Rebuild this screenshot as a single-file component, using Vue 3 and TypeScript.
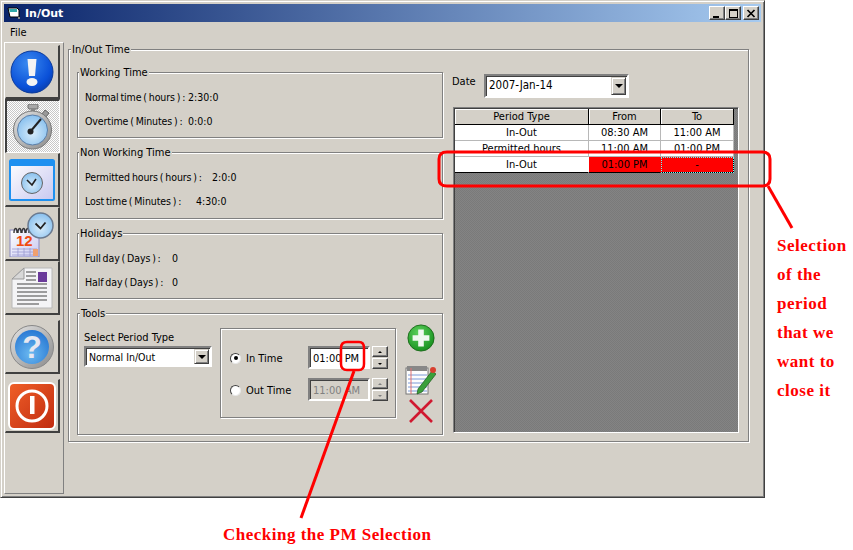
<template>
  <div class="page">
    <div class="top">
      <div class="window">
        <div class="titlebar">
          <svg class="app-icon" width="14" height="14" viewBox="0 0 14 14">
            <path d="M1 2h9l2 2v7H3z" fill="#fff" stroke="#000" />
            <path d="M2 3h8v3H3z" fill="#3aa" />
            <rect x="11" y="11" width="2" height="2" fill="#888" />
          </svg>
          <span class="title">In/Out</span>
          <div class="caption-btns">
            <button class="cap-btn"><i class="min"></i></button>
            <button class="cap-btn"><i class="max"></i></button>
            <button class="cap-btn close-btn">
              <svg width="10" height="9" viewBox="0 0 10 9"><path d="M1.5 1l7 7M8.5 1l-7 7" stroke="#000" stroke-width="1.7" fill="none" /></svg>
            </button>
          </div>
        </div>
        <div class="menubar"><span>File</span></div>

        <div class="client">
          <div class="sidebar">
            <button class="side-btn">
              <svg width="44" height="44" viewBox="0 0 44 44">
                <circle cx="22" cy="22" r="21" fill="url(#blueBall)" stroke="#0a3a9a" />
                <path d="M17.5 9h9l-1.5 17h-6z" fill="#f4f4f4" />
                <ellipse cx="22" cy="32" rx="5.5" ry="4" fill="#f4f4f4" />
              </svg>
            </button>
            <button class="side-btn active">
              <svg width="42" height="46" viewBox="0 0 42 46">
                <rect x="16" y="0" width="10" height="5" rx="1.5" fill="#a8a8a8" stroke="#666" />
                <rect x="19" y="4" width="4" height="4" fill="#888" />
                <path d="M33 6l4 3-3 4-4-3z" fill="#999" stroke="#666" />
                <circle cx="20.500" cy="26" r="19" fill="url(#steel)" stroke="#777" />
                <circle cx="20.500" cy="26" r="15" fill="url(#face)" stroke="#5a7ea8" />
                <path d="M18 28L29 15" stroke="#222" stroke-width="2" />
                <circle cx="18.500" cy="27.500" r="3" fill="#222" />
              </svg>
            </button>
            <button class="side-btn">
              <svg width="46" height="42" viewBox="0 0 46 42">
                <rect x="1" y="1" width="44" height="40" rx="1.500" fill="url(#paper)" stroke="#1e90f0" stroke-width="2" />
                <rect x="1" y="1" width="44" height="6" fill="#1e90f0" />
                <circle cx="23" cy="24" r="10.500" fill="url(#face)" stroke="#666" />
                <path d="M18 21l5 5 4-6" stroke="#222" stroke-width="1.600" fill="none" />
              </svg>
            </button>
            <button class="side-btn">
              <svg width="46" height="46" viewBox="0 -2 46 46">
                <rect x="1" y="17" width="29" height="27" fill="url(#paper)" stroke="#8a8ac0" />
                <path d="M5 20c0-6 3-6 3 0M9 20c0-6 3-6 3 0M13 20c0-6 3-6 3 0M17 20c0-6 3-6 3 0" stroke="#333" fill="none" stroke-width="1.400" />
                <text x="7" y="33" class="cal-num">12</text>
                <path d="M3 36h25M3 39h25M3 42h25M9 35v8M15 35v8M21 35v8" stroke="#9a9ad0" stroke-width=".8" />
                <rect x="24" y="36" width="5" height="7" fill="#f0a070" />
                <circle cx="31.500" cy="12.500" r="12.500" fill="url(#face)" stroke="#6a7a90" stroke-width="1.500" />
                <path d="M26.500 10.500l5 5 5-6" stroke="#222" stroke-width="1.800" fill="none" />
              </svg>
            </button>
            <button class="side-btn">
              <svg width="42" height="42" viewBox="0 0 42 42">
                <path d="M13 1h28v40H1V12z" fill="#f4f4f6" stroke="#b8b8b8" />
                <path d="M13 1v11H1z" fill="#d8d8d8" stroke="#999" />
                <rect x="27" y="5" width="9" height="10" fill="#6a3a9a" />
                <path d="M15 5h10M15 9h10M15 13h10M6 17h30M6 21h30M6 25h30M6 29h30M6 33h30M6 37h22" stroke="#444" stroke-width="1" />
              </svg>
            </button>
            <button class="side-btn sep">
              <svg width="44" height="44" viewBox="0 0 44 44">
                <circle cx="22" cy="22" r="21.500" fill="url(#steel)" stroke="#888" />
                <circle cx="22" cy="22" r="17" fill="url(#blueBall2)" />
                <text x="22" y="33" class="q-mark">?</text>
              </svg>
            </button>
            <button class="side-btn sep">
              <svg width="48" height="48" viewBox="0 0 48 48">
                <rect x="1" y="1" width="46" height="46" rx="5" fill="url(#redSq)" stroke="#fff" stroke-width="2" />
                <circle cx="24" cy="24" r="15" fill="none" stroke="#fff" stroke-width="3" />
                <rect x="22" y="14" width="4.500" height="18" fill="#fff" />
              </svg>
            </button>
          </div>

          <fieldset class="group main-group">
            <legend>In/Out Time</legend>
            <div class="main-inner">
              <div class="left-col">
                <fieldset v-for="g in summary" :key="g.title" class="group info" :class="g.cls">
                  <legend>{{ g.title }}</legend>
                  <div v-for="r in g.rows" :key="r.label" class="info-row">
                    <span class="info-label" :style="{ width: r.width + 'px' }">{{ r.label }}</span>{{ r.value }}
                  </div>
                </fieldset>

                <fieldset class="group tools">
                  <legend>Tools</legend>
                  <div class="tools-inner">
                    <div class="period-col">
                      <div class="period-label">Select Period Type</div>
                      <div class="combo period-combo">
                        <span class="combo-text">Normal In/Out</span>
                        <span class="combo-arrow"><i></i></span>
                      </div>
                    </div>

                    <div class="time-box">
                      <div class="time-row">
                        <label class="radio-label"><span class="radio on"></span>In Time</label>
                        <div class="time-input">01:00 PM</div>
                        <div class="spin">
                          <span class="spin-btn"><i class="up"></i></span>
                          <span class="spin-btn"><i class="down"></i></span>
                        </div>
                      </div>
                      <div class="time-row">
                        <label class="radio-label"><span class="radio"></span>Out Time</label>
                        <div class="time-input disabled">11:00 AM</div>
                        <div class="spin off">
                          <span class="spin-btn"><i class="up"></i></span>
                          <span class="spin-btn"><i class="down"></i></span>
                        </div>
                      </div>
                    </div>

                    <div class="tool-icons">
                      <svg width="28" height="28" viewBox="0 0 30 30">
                        <circle cx="15" cy="15" r="14" fill="url(#greenBall)" stroke="#1a6a1a" />
                        <path d="M12 6h6v6h6v6h-6v6h-6v-6H6v-6h6z" fill="#f0f8f0" />
                      </svg>
                      <svg width="31" height="32" viewBox="0 0 31 32">
                        <rect x="1" y="5" width="22" height="26" fill="#fdfdfd" stroke="#777" />
                        <path d="M2 3h20v5H2z" fill="#888" />
                        <path d="M3 12h19M3 16h19M3 20h19M3 24h19M3 28h19" stroke="#7a9ad8" />
                        <path d="M6 5v26" stroke="#e07070" />
                        <path d="M13 26l14-18 4 3-14 18-5 2z" fill="#3aa03a" stroke="#1a5a1a" stroke-width=".7" />
                        <circle cx="28" cy="7" r="3" fill="#d84030" />
                      </svg>
                      <svg width="26" height="26" viewBox="0 0 26 26">
                        <path d="M2 2l22 22M24 2L2 24" stroke="#d01830" stroke-width="2.600" fill="none" />
                      </svg>
                    </div>
                  </div>
                </fieldset>
              </div>

              <div class="right-col">
                <div class="date-row">
                  <span class="date-label">Date</span>
                  <div class="combo date-combo">
                    <span class="combo-text">2007-Jan-14</span>
                    <span class="combo-arrow"><i></i></span>
                  </div>
                </div>
                <div class="grid-wrap">
                  <table class="period-grid">
                    <thead>
                      <tr>
                        <th class="c1">Period Type</th>
                        <th class="c2">From</th>
                        <th class="c3">To</th>
                      </tr>
                    </thead>
                    <tbody>
                      <tr v-for="p in periods" :key="p.type + p.from">
                        <td>{{ p.type }}</td>
                        <td>{{ p.from }}</td>
                        <td>{{ p.to }}</td>
                      </tr>
                      <tr class="current">
                        <td>In-Out</td>
                        <td class="sel">01:00 PM</td>
                        <td class="sel focus">-</td>
                      </tr>
                    </tbody>
                  </table>
                </div>
              </div>
            </div>
          </fieldset>
        </div>
      </div>

      <div class="note">
        <div v-for="line in noteLines" :key="line">{{ line }}</div>
      </div>
    </div>

    <div class="bottom-note">Checking the PM Selection</div>

    <!-- annotations drawn on top of the screenshot -->
    <svg class="marks" width="853" height="550" viewBox="0 0 853 550">
      <path d="M447 152H762Q770 152 770 159V179Q770 186 762 186H447Q439 186 439 179V159Q439 152 447 152Z" fill="none" stroke="#f00" stroke-width="3" />
      <path d="M768 186L792 228" stroke="#f00" stroke-width="3" fill="none" />
      <path d="M347 342H359Q364 342 364 348V364Q364 370 359 370H347Q341 370 341 364V348Q341 342 347 342Z" fill="none" stroke="#f00" stroke-width="2.500" />
      <path d="M354 371L301 518" stroke="#f00" stroke-width="3" fill="none" />
    </svg>

    <svg width="0" height="0" class="defs">
      <defs>
        <radialGradient id="blueBall" cx=".4" cy=".3" r=".8">
          <stop offset="0" stop-color="#3a8af0" /><stop offset=".7" stop-color="#0a50d8" /><stop offset="1" stop-color="#0838a0" />
        </radialGradient>
        <radialGradient id="blueBall2" cx=".45" cy=".7" r=".8">
          <stop offset="0" stop-color="#6ab8f0" /><stop offset="1" stop-color="#2070d0" />
        </radialGradient>
        <linearGradient id="steel" x1="0" y1="0" x2="1" y2="1">
          <stop offset="0" stop-color="#e4e4e4" /><stop offset="1" stop-color="#8a8a8a" />
        </linearGradient>
        <radialGradient id="face" cx=".5" cy=".6" r=".7">
          <stop offset="0" stop-color="#d8ecfa" /><stop offset="1" stop-color="#7ab8ec" />
        </radialGradient>
        <linearGradient id="paper" x1="0" y1="0" x2="1" y2="1">
          <stop offset="0" stop-color="#ffffff" /><stop offset="1" stop-color="#c8c8f0" />
        </linearGradient>
        <linearGradient id="redSq" x1="0" y1="0" x2="1" y2="1">
          <stop offset="0" stop-color="#f06028" /><stop offset="1" stop-color="#c02a10" />
        </linearGradient>
        <radialGradient id="greenBall" cx=".4" cy=".3" r=".8">
          <stop offset="0" stop-color="#5cd05c" /><stop offset="1" stop-color="#108a18" />
        </radialGradient>
      </defs>
    </svg>
  </div>
</template>

<script setup lang="ts">
const summary = [
  {
    title: 'Working Time',
    cls: 'h73',
    rows: [
      { label: 'Normal time ( hours ) :', value: '2:30:0', width: 103 },
      { label: 'Overtime ( Minutes ) :', value: '0:0:0', width: 103 },
    ],
  },
  {
    title: 'Non Working Time',
    cls: 'h74',
    rows: [
      { label: 'Permitted hours ( hours ) :', value: '2:0:0', width: 127 },
      { label: 'Lost time ( Minutes ) :', value: '4:30:0', width: 111 },
    ],
  },
  {
    title: 'Holidays',
    cls: 'h73',
    rows: [
      { label: 'Full day ( Days ) :', value: '0', width: 87 },
      { label: 'Half day ( Days ) :', value: '0', width: 87 },
    ],
  },
]

const periods = [
  { type: 'In-Out', from: '08:30 AM', to: '11:00 AM' },
  { type: 'Permitted hours', from: '11:00 AM', to: '01:00 PM' },
]

const noteLines = ['Selection', 'of the', 'period', 'that we', 'want to', 'close it']
</script>

<style>
html,
body {
  margin: 0;
  background: #fff;
}
</style>

<style scoped>
.page {
  position: relative;
  width: 853px;
  height: 550px;
  overflow: hidden;
  font-family: 'DejaVu Sans Condensed', 'Liberation Sans', Arial, sans-serif;
  font-size: 11px;
  color: #000;
}

.top {
  display: flex;
  align-items: flex-start;
}

.window {
  width: 765px;
  height: 498px;
  flex: none;
  box-sizing: border-box;
  padding: 3px;
  background: #d4d0c8;
  border: 1px solid;
  border-color: #d4d0c8 #404040 #404040 #d4d0c8;
  box-shadow: inset 1px 1px 0 #fff, inset -1px -1px 0 #808080;
  display: flex;
  flex-direction: column;
}

.titlebar {
  height: 18px;
  flex: none;
  display: flex;
  align-items: center;
  padding: 0 2px 0 3px;
  background: linear-gradient(90deg, #0a246a, #a6caf0);
  color: #fff;
}

.app-icon {
  margin-right: 4px;
}

.title {
  font-family: 'DejaVu Sans', sans-serif;
  font-size: 11px;
  font-weight: bold;
}

.caption-btns {
  margin-left: auto;
  display: flex;
}

.cap-btn {
  width: 16px;
  height: 14px;
  padding: 0;
  background: #d4d0c8;
  border: 1px solid;
  border-color: #fff #404040 #404040 #fff;
  box-shadow: inset -1px -1px 0 #808080;
  display: flex;
  align-items: center;
  justify-content: center;
}

.close-btn {
  margin-left: 2px;
}

.min {
  width: 6px;
  height: 2px;
  background: #000;
  margin-top: 7px;
  margin-right: 3px;
}

.max {
  width: 7px;
  height: 6px;
  border: 1px solid #000;
  border-top-width: 2px;
}

.menubar {
  height: 20px;
  flex: none;
  display: flex;
  align-items: center;
  padding-left: 6px;
}

.client {
  flex: 1;
  min-height: 0;
  display: flex;
  align-items: flex-start;
}

.sidebar {
  width: 60px;
  height: 452px;
  flex: none;
  box-sizing: border-box;
  border: 1px solid;
  border-color: #fff #808080 #808080 #fff;
  padding: 2px 3px 0 0;
  display: flex;
  flex-direction: column;
}

.side-btn {
  width: 55px;
  height: 54px;
  flex: none;
  box-sizing: border-box;
  padding: 0;
  background: #d4d0c8;
  border: 1px solid;
  border-color: #d4d0c8 #404040 #404040 #d4d0c8;
  border-bottom-width: 2px;
  border-right-width: 2px;
  display: flex;
  align-items: center;
  justify-content: center;
}

.side-btn.active {
  border-color: #404040 #fff #fff #404040;
  border-width: 2px 1px 1px 2px;
  background: repeating-conic-gradient(#ffffff 0 25%, #c8c8c8 0 50%) 0 0 / 2px 2px;
}

.side-btn.sep {
  margin-top: 5px;
}

.group {
  margin: 0;
  min-width: 0;
  box-sizing: border-box;
  border: 1px solid #808080;
  box-shadow: inset 1px 1px 0 #fff, 1px 1px 0 #fff;
}

.group > legend {
  padding: 1px 1px 0;
  margin-left: -6px;
  margin-bottom: -1px;
  line-height: 14px;
  background: #d4d0c8;
}

.main-group {
  width: 681px;
  height: 400px;
  margin-left: 4px;
  padding: 9px 8px 0 8px;
}

.main-inner {
  display: flex;
  gap: 9px;
}

.left-col {
  width: 366px;
  flex: none;
  display: flex;
  flex-direction: column;
  gap: 7px;
}

.info {
  padding: 6px 7px 0;
}

.h73 {
  height: 73px;
}

.h74 {
  height: 74px;
}

.info-row {
  height: 24px;
  line-height: 24px;
  font-size: 10.5px;
  white-space: nowrap;
}

.info-label {
  display: inline-block;
  word-spacing: -1px;
  letter-spacing: -0.1px;
}

.tools {
  height: 129px;
  padding: 8px 7px 0 6px;
}

.tools > legend {
  margin-left: -4px;
}

.tools-inner {
  display: flex;
  align-items: flex-start;
}

.period-col {
  width: 136px;
  flex: none;
  padding-top: 2px;
}

.period-label {
  height: 14px;
  line-height: 16px;
  margin-bottom: 2px;
}

.combo {
  box-sizing: border-box;
  background: #fff;
  border: 2px solid;
  border-color: #808080 #fff #fff #808080;
  box-shadow: inset 1px 1px 0 #404040;
  display: flex;
  align-items: center;
  padding: 1px 1px 1px 3px;
}

.combo-text {
  flex: 1;
}

.combo-arrow {
  flex: none;
  width: 15px;
  align-self: stretch;
  box-sizing: border-box;
  background: #d4d0c8;
  border: 1px solid;
  border-color: #d4d0c8 #404040 #404040 #d4d0c8;
  box-shadow: inset 1px 1px 0 #fff, inset -1px -1px 0 #808080;
  display: flex;
  align-items: center;
  justify-content: center;
}

.combo-arrow i {
  width: 0;
  height: 0;
  border-left: 4px solid transparent;
  border-right: 4px solid transparent;
  border-top: 4px solid #000;
}

.period-combo {
  width: 128px;
  height: 21px;
  font-size: 10.5px;
}

.time-box {
  width: 176px;
  height: 90px;
  flex: none;
  box-sizing: border-box;
  border: 1px solid #808080;
  box-shadow: inset 1px 1px 0 #fff, 1px 1px 0 #fff;
  padding: 17px 0 0 9px;
  display: flex;
  flex-direction: column;
  gap: 9px;
}

.time-row {
  display: flex;
  align-items: center;
  height: 23px;
}

.radio-label {
  width: 78px;
  flex: none;
  margin-top: 1px;
  display: flex;
  align-items: center;
  gap: 5px;
}

.radio {
  width: 11px;
  height: 11px;
  box-sizing: border-box;
  border-radius: 50%;
  background: #fff;
  border: 1px solid;
  border-color: #404040 #e8e8e8 #e8e8e8 #404040;
  display: flex;
  align-items: center;
  justify-content: center;
}

.radio.on::after {
  content: '';
  width: 4px;
  height: 4px;
  border-radius: 50%;
  background: #000;
}

.time-input {
  width: 62px;
  height: 23px;
  box-sizing: border-box;
  flex: none;
  background: #fff;
  border: 2px solid;
  border-color: #808080 #fff #fff #808080;
  box-shadow: inset 1px 1px 0 #404040;
  line-height: 21px;
  padding-left: 3px;
  white-space: nowrap;
}

.time-input.disabled {
  background: #d4d0c8;
  color: #808080;
}

.spin {
  width: 16px;
  margin-left: 2px;
  display: flex;
  flex-direction: column;
  gap: 1px;
}

.spin-btn {
  height: 11px;
  box-sizing: border-box;
  background: #d4d0c8;
  border: 1px solid;
  border-color: #fff #404040 #404040 #fff;
  box-shadow: inset -1px -1px 0 #808080;
  display: flex;
  align-items: center;
  justify-content: center;
}

.spin-btn i {
  width: 0;
  height: 0;
  border-left: 2px solid transparent;
  border-right: 2px solid transparent;
}

.spin-btn .up {
  border-bottom: 2px solid #000;
}

.spin-btn .down {
  border-top: 2px solid #000;
}

.spin.off .up {
  border-bottom-color: #808080;
}

.spin.off .down {
  border-top-color: #808080;
}

.tool-icons {
  width: 31px;
  margin-left: 9px;
  margin-top: -4px;
  display: flex;
  flex-direction: column;
  align-items: center;
  gap: 11px;
}

.tool-icons svg + svg + svg {
  margin-top: -8px;
}

.right-col {
  width: 287px;
  flex: none;
}

.date-row {
  display: flex;
  align-items: flex-start;
  height: 42px;
  padding-top: 9px;
  box-sizing: border-box;
}

.date-label {
  width: 32px;
  flex: none;
  margin-top: 1px;
  line-height: 14px;
}

.date-combo {
  width: 145px;
  height: 24px;
  font-size: 11.5px;
}

.date-combo .combo-text {
  margin-top: -3px;
}

.grid-wrap {
  margin-left: 1px;
  width: 286px;
  height: 326px;
  box-sizing: border-box;
  background: repeating-conic-gradient(#848484 0 25%, #7a7a7a 0 50%) 0 0 / 2px 2px;
  border: 1px solid;
  border-color: #808080 #fff #fff #808080;
  box-shadow: inset 1px 1px 0 #404040;
  padding: 1px 0 0 1px;
}

.period-grid {
  border-collapse: separate;
  border-spacing: 0;
  table-layout: fixed;
  width: 279px;
}

.period-grid th,
.period-grid td {
  padding: 0;
  text-align: center;
  font-weight: normal;
  height: 16px;
  line-height: 15px;
  box-sizing: border-box;
  overflow: hidden;
  white-space: nowrap;
  background: #fff;
  border-right: 1px solid #b8b8b8;
  border-bottom: 1px solid #b8b8b8;
}

.period-grid th {
  padding-top: 1px;
  line-height: 14px;
  background: #d4d0c8;
  border-right: 1px solid #000;
  border-bottom: 1px solid #000;
  box-shadow: inset 1px 1px 0 #fff;
}

.c1 {
  width: 134px;
}

.c2 {
  width: 72px;
}

.c3 {
  width: 73px;
}

.period-grid .current td {
  border-bottom-color: #000;
  border-right-color: transparent;
}

.period-grid .current td.sel {
  background: #f00;
}

.period-grid .current td.focus {
  outline: 1px dotted #6ff;
  outline-offset: -1px;
  border-right-color: #000;
}

.note {
  padding: 231px 0 0 12px;
  font-family: 'Liberation Serif', 'Times New Roman', serif;
  font-size: 17px;
  font-weight: bold;
  letter-spacing: 0.5px;
  line-height: 29px;
  color: #f00;
  white-space: nowrap;
}

.bottom-note {
  margin: 26px 0 0 223px;
  font-family: 'Liberation Serif', 'Times New Roman', serif;
  font-size: 17px;
  font-weight: bold;
  letter-spacing: 0.5px;
  line-height: 22px;
  color: #f00;
  white-space: nowrap;
}

.marks {
  position: absolute;
  top: 0;
  left: 0;
  pointer-events: none;
}

.defs {
  position: absolute;
}

.cal-num {
  font: bold 15px 'Liberation Sans', sans-serif;
  fill: #f04a10;
}

.q-mark {
  font: bold 32px 'Liberation Sans', sans-serif;
  fill: #e8e8f0;
  text-anchor: middle;
}
</style>
